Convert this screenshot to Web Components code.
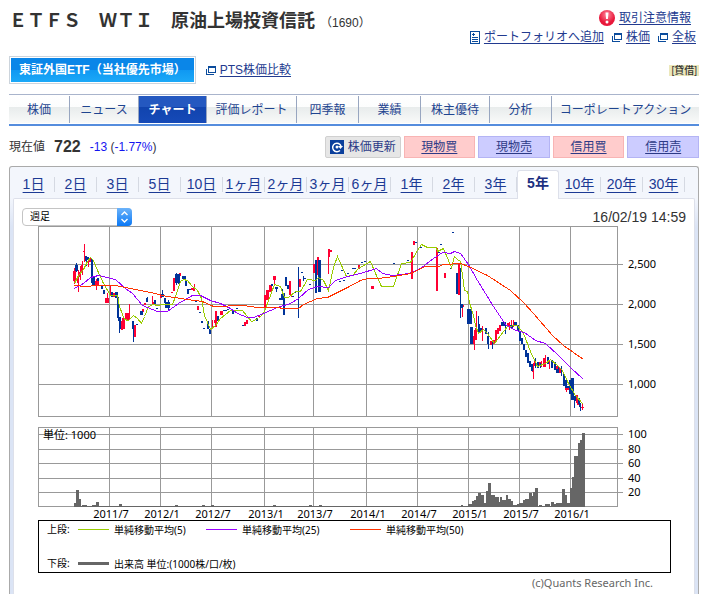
<!DOCTYPE html>
<html lang="ja">
<head>
<meta charset="utf-8">
<meta name="viewport" content="width=device-width, initial-scale=1">
<title>ETFS WTI 原油上場投資信託 (1690)</title>
<style>
  body {
    margin: 0;
    background: #fff;
    color: #333;
    font: 12px/18px "Liberation Sans", "Noto Sans CJK JP", sans-serif;
  }
</style>
</head>
<body>
<quote-page>
  <quote-header code="1690">ＥＴＦＳ　ＷＴＩ　原油上場投資信託</quote-header>
  <market-row></market-row>
  <page-nav></page-nav>
  <price-row price="722" change="-13" percent="-1.77%"></price-row>
  <chart-panel>
    <period-tabs slot="tabs" active="5年"></period-tabs>
    <chart-toolbar time="16/02/19 14:59"></chart-toolbar>
    <price-chart></price-chart>
    <chart-legend></chart-legend>
  </chart-panel>
</quote-page>

<script>
// Base class: every component only has to supply its template()
class BaseElement extends HTMLElement {
  constructor() {
    super();
    this.attachShadow({ mode: 'open' });
  }

  connectedCallback() {
    this.shadowRoot.innerHTML = this.template();
  }
}

class QuotePage extends BaseElement {
  template() {
    return `
      <style>
        :host {
          display: flex;
          flex-direction: column;
          box-sizing: border-box;
          min-height: 100vh;
          padding: 8px 9px 0;
        }
      </style>
      <slot></slot>
    `;
  }
}
customElements.define('quote-page', QuotePage);

class IconLink extends BaseElement {
  template() {
    const icons = {
      window: `<svg width="10" height="9" viewBox="0 0 10 9" fill="none" stroke="#0a4b9c" shape-rendering="crispEdges">
        <path d="M.5 3v5.500H8M2.500 1v5.500h7V1"/><path d="M2 1h8" stroke-width="2"/></svg>`,
      page: `<svg width="10" height="13" viewBox="0 0 10 13" fill="none" stroke="#0a4b9c" shape-rendering="crispEdges">
        <path d="M.5.5h9v12h-9zM2 3.500h3M3.500 2v3M2 6.500h6M2 8.500h6M2 10.500h6"/></svg>`,
      alert: `<svg width="16" height="16" viewBox="0 0 16 16">
        <defs><radialGradient id="g" cy=".3"><stop offset="0" stop-color="#ff8a9c"/><stop offset="1" stop-color="#e8173a"/></radialGradient></defs>
        <circle cx="8" cy="8" r="8" fill="url(#g)"/><path d="M6.500 2.500h3l-.6 6.500H7.100z" fill="#fff"/><circle cx="8" cy="12" r="1.500" fill="#fff"/></svg>`
    };
    return `
      <style>
        :host { display: inline-flex; align-items: center; gap: 4px; }
        svg { flex: none; }
        a {
          color: #223a8f;
          text-decoration: underline;
          text-underline-offset: 2px;
          white-space: nowrap;
        }
      </style>
      ${icons[this.getAttribute('icon')]}
      <a href="#"><slot></slot></a>
    `;
  }
}
customElements.define('icon-link', IconLink);

class QuoteHeader extends BaseElement {
  template() {
    return `
      <style>
        :host { display: flex; justify-content: space-between; height: 48px; }
        h1 {
          margin: 0;
          font-size: 18px;
          line-height: 26px;
          white-space: nowrap;
        }
        .code { font-size: 12px; font-weight: normal; }
        .links {
          display: flex;
          flex-direction: column;
          align-items: flex-end;
          padding-right: 3px;
        }
        .links > icon-link { padding-right: 5px; height: 20px; }
        .row { display: flex; gap: 8px; }
      </style>
      <h1><slot></slot> <span class="code">（${this.getAttribute('code')}）</span></h1>
      <div class="links">
        <icon-link icon="alert">取引注意情報</icon-link>
        <div class="row">
          <icon-link icon="page">ポートフォリオへ追加</icon-link>
          <icon-link icon="window">株価</icon-link>
          <icon-link icon="window">全板</icon-link>
        </div>
      </div>
    `;
  }
}
customElements.define('quote-header', QuoteHeader);

class MarketRow extends BaseElement {
  template() {
    return `
      <style>
        :host { display: flex; align-items: center; gap: 10px; height: 28px; margin-bottom: 10px; }
        button {
          height: 28px;
          padding: 0 9px;
          border: 1px solid #ccd4dc;
          box-shadow: inset 0 0 0 1px #fff;
          background: linear-gradient(#0a86e8 0, #0a86e8 50%, #0f98f2 50%, #1caaf8);
          color: #fff;
          font: bold 12px/18px "Liberation Sans", "Noto Sans CJK JP", sans-serif;
        }
        .loan {
          margin-left: auto;
          background: #ece8bc;
          font-size: 10px;
          line-height: 11px;
          font-weight: 500;
          padding: 0 2px;
        }
      </style>
      <button type="button">東証外国ETF（当社優先市場）</button>
      <icon-link icon="window">PTS株価比較</icon-link>
      <span class="loan">[貸借]</span>
    `;
  }
}
customElements.define('market-row', MarketRow);

class PageNav extends BaseElement {
  template() {
    const items = ['株価', 'ニュース', 'チャート', '評価レポート', '四季報', '業績', '株主優待', '分析', 'コーポレートアクション'];
    return `
      <style>
        :host { display: block; }
        nav {
          display: grid;
          grid-template-columns: 61fr 69fr 68fr 90fr 62fr 62fr 69fr 62fr 147fr;
          padding: 1px 0;
          border-top: 1px solid #a9b4cc;
          border-bottom: 2px solid #558ddd;
        }
        a {
          min-width: 0;
          height: 27px;
          line-height: 28px;
          box-sizing: border-box;
          border-right: 1px solid #98a6c0;
          background: linear-gradient(#fff 0, #fcfdfd 42%, #e8ecec 42%, #f9faf9 100%);
          color: #1f4590;
          text-align: center;
          text-decoration: none;
          white-space: nowrap;
        }
        a:last-child { border-right: 0; }
        a.active {
          background: linear-gradient(#2458c0 0, #2458c0 42%, #1144ae 42%, #164ab8);
          color: #fff;
          font-weight: bold;
        }
      </style>
      <nav>
        ${items.map(t => `<a href="#"${t === 'チャート' ? ' class="active"' : ''}>${t}</a>`).join('')}
      </nav>
    `;
  }
}
customElements.define('page-nav', PageNav);

class PriceRow extends BaseElement {
  template() {
    const trades = [['現物買', 'buy'], ['現物売', 'sell'], ['信用買', 'buy'], ['信用売', 'sell']];
    return `
      <style>
        :host { display: flex; align-items: center; margin: 10px 0 8px; gap: 9px; height: 22px; }
        strong { font-size: 16px; }
        .change { color: #1414f0; margin-right: auto; }
        .change i { font-style: normal; color: #334; }
        .actions { display: grid; grid-template-columns: 76fr 72fr 72fr 72fr 72fr; gap: 3px; width: 374px; }
        button, a {
          box-sizing: border-box;
          min-width: 0;
          height: 22px;
          font: 12px/20px "Liberation Sans", "Noto Sans CJK JP", sans-serif;
          text-align: center;
          white-space: nowrap;
          color: #2c3a86;
          text-underline-offset: 2px;
        }
        button {
          display: flex;
          align-items: center;
          justify-content: center;
          gap: 4px;
          padding: 0;
          border: 1px solid #d0d0d0;
          border-radius: 2px;
          background: #e6e6e6;
        }
        .buy { background: #fcc; border: 1px solid #f8b4b4; }
        .sell { background: #ccf; border: 1px solid #b4b4f4; }
      </style>
      <span>現在値</span>
      <strong>${this.getAttribute('price')}</strong>
      <span class="change">${this.getAttribute('change')} <i>(</i>${this.getAttribute('percent')}<i>)</i></span>
      <div class="actions">
        <button type="button">
          <svg width="14" height="14" viewBox="0 0 14 14">
            <rect width="14" height="14" fill="#0b3f9c"/>
            <path d="M10 10.500A4.300 4.300 0 1 1 11 6" fill="none" stroke="#fff" stroke-width="1.500"/>
            <path d="M13 6H8l2.500 3z" fill="#fff"/><circle cx="7" cy="7" r="1.500" fill="#fff"/>
          </svg>
          株価更新
        </button>
        ${trades.map(([t, c]) => `<a href="#" class="${c}">${t}</a>`).join('')}
      </div>
    `;
  }
}
customElements.define('price-row', PriceRow);

class ChartPanel extends BaseElement {
  template() {
    return `
      <style>
        :host {
          display: flex;
          flex-direction: column;
          flex: 1;
          padding: 0 3px;
          border: 1px solid #aaa;
          border-bottom: 0;
          border-radius: 3px 3px 0 0;
          background: linear-gradient(#f3f6fc 0, #f3f6fc 31px, #dbe4f5 60px);
        }
        .body {
          flex: 1;
          border: 1px solid #dde0ea;
          border-bottom: 0;
          border-radius: 2px 2px 0 0;
          background: #fff;
        }
      </style>
      <slot name="tabs"></slot>
      <div class="body"><slot></slot></div>
    `;
  }
}
customElements.define('chart-panel', ChartPanel);

class PeriodTabs extends BaseElement {
  template() {
    const periods = ['1日', '2日', '3日', '5日', '10日', '1ヶ月', '2ヶ月', '3ヶ月', '6ヶ月',
      '1年', '2年', '3年', '5年', '10年', '20年', '30年'];
    const active = this.getAttribute('active');
    return `
      <style>
        :host { display: block; position: relative; padding: 3px 10px 0 0; margin-bottom: -1px; }
        nav { display: grid; grid-template-columns: repeat(16, 1fr); align-items: center; height: 29px; }
        a {
          border-right: 1px solid #d5d9e2;
          font-size: 14px;
          line-height: 15px;
          color: #1c3a94;
          text-align: center;
          text-underline-offset: 3px;
          white-space: nowrap;
        }
        a.active {
          align-self: stretch;
          border: 1px solid #dde0ea;
          border-bottom: 0;
          border-radius: 3px 3px 0 0;
          background: #fff;
          line-height: 25px;
          font-weight: bold;
          text-decoration: none;
          color: #1c2f80;
        }
      </style>
      <nav>
        ${periods.map(p => `<a href="#"${p === active ? ' class="active"' : ''}>${p}</a>`).join('')}
      </nav>
    `;
  }
}
customElements.define('period-tabs', PeriodTabs);

class ChartToolbar extends BaseElement {
  template() {
    return `
      <style>
        :host {
          display: flex;
          justify-content: space-between;
          align-items: center;
          padding: 9px 8px 0 8px;
        }
        label { display: grid; align-items: center; width: 110px; }
        select, svg { grid-area: 1 / 1; }
        select {
          appearance: none;
          height: 18px;
          padding: 0 7px;
          border: 1px solid #c4c4c4;
          border-radius: 4px;
          background: #fff;
          color: #000;
          font: 10px/16px "Liberation Sans", "Noto Sans CJK JP", sans-serif;
        }
        svg { justify-self: end; pointer-events: none; }
        time { font-size: 14px; line-height: 18px; }
      </style>
      <label>
        <select aria-label="足種">
          <option>週足</option>
          <option>日足</option>
          <option>月足</option>
        </select>
        <svg width="15" height="18" viewBox="0 0 15 18">
          <defs><linearGradient id="b" x2="0" y2="1"><stop stop-color="#6cb3fa"/><stop offset="1" stop-color="#0a78f5"/></linearGradient></defs>
          <path d="M0 0h11a4 4 0 0 1 4 4v10a4 4 0 0 1-4 4H0z" fill="url(#b)"/>
          <path d="M4.500 7l3-3 3 3M4.500 11l3 3 3-3" fill="none" stroke="#fff" stroke-width="1.400"/>
        </svg>
      </label>
      <time>${this.getAttribute('time')}</time>
    `;
  }
}
customElements.define('chart-toolbar', ChartToolbar);

// Candle parts as [x, y, width, height]
const UP = [
  [73,271,3,10],[74,268,1,16],[78,270,1,22],[77,276,2,7],[80,266,1,14],[79,272,2,5],[82,261,1,14],[81,265,2,6],[84,244,1,18],[83,251,2,1],[88,258,1,9],[89,258,2,4],
  [95,281,4,4],[96,279,1,11],[105,298,4,5],[107,293,1,6],[110,286,1,9],[113,293,2,4],[122,318,3,11],[121,321,2,9],[125,313,5,7],[129,304,1,11],
  [134,325,2,12],[142,309,2,3],[144,303,2,2],[152,296,1,9],[153,302,2,3],[160,295,2,3],[171,292,2,1],[173,278,2,13],[179,273,2,3],[191,288,2,2],
  [193,287,2,4],[194,284,1,7],[197,306,2,4],[212,320,1,8],[214,320,2,3],[215,311,2,16],[220,311,3,4],[244,322,2,4],[246,320,2,4],[258,315,2,2],
  [264,295,2,12],[266,290,3,10],[269,285,3,7],[273,276,3,4],[274,276,1,9],[289,281,2,14],[291,296,2,1],[299,279,2,8],[313,264,2,9],[317,257,2,18],
  [328,249,2,8],[328,249,1,25],[330,250,2,2],[358,265,2,4],[371,286,3,3],[411,252,2,27],[413,241,2,4],[436,248,2,43],[444,273,2,5],[458,264,2,31],
  [462,305,2,2],[462,306,1,11],[472,336,2,8],[474,330,1,20],[475,328,2,12],[476,311,1,22],[482,326,1,15],[490,341,2,4],[493,340,2,4],[495,330,2,12],
  [497,328,2,6],[499,325,2,6],[507,323,2,3],[509,322,1,8],[511,320,1,8],[513,320,1,7],[533,363,1,16],[532,366,2,6],[534,361,2,5],[539,362,2,3],
  [541,361,1,6],[543,358,3,9],[545,355,1,8],[549,361,1,8],[556,366,2,3],[559,368,2,5],[565,388,4,2],[566,386,1,6],[576,395,2,8],[577,400,2,5],[582,404,1,6],[581,407,3,1]
];

const DOWN = [
  [75,265,3,6],[76,263,1,9],[85,256,2,5],[86,256,1,10],[87,257,2,3],[91,259,2,24],[92,262,1,23],[93,277,2,9],[97,278,2,3],[101,286,2,3],[103,290,2,4],
  [111,292,2,5],[115,292,3,6],[117,297,2,21],[118,298,1,23],[119,317,2,12],[119,317,1,16],[132,321,2,8],[133,321,1,21],[136,324,2,1],[138,320,2,1],
  [140,311,3,4],[146,298,2,4],[147,297,1,4],[154,300,2,4],[156,308,2,1],[161,294,3,3],[162,290,1,6],[164,298,2,5],[165,302,5,6],[168,300,1,10],[175,274,5,9],
  [176,273,1,12],[178,276,2,8],[182,276,4,3],[185,281,2,5],[187,289,2,5],[189,289,2,1],[195,301,2,1],[199,312,2,1],[201,321,2,2],[203,328,2,1],[207,321,2,8],
  [209,329,2,5],[217,316,2,5],[223,310,4,1],[227,309,2,1],[232,310,2,4],[236,308,2,1],[242,325,2,1],[256,318,2,3],[271,284,2,2],[275,287,3,2],[276,287,1,5],
  [279,298,4,2],[281,294,2,5],[282,289,1,8],[283,293,2,22],[285,277,2,9],[287,285,2,4],[292,296,2,1],[294,292,2,1],[298,267,1,51],[301,272,2,1],
  [303,276,1,5],[304,278,2,1],[309,284,2,1],[315,260,2,33],[318,260,3,32],[339,281,2,1],[341,270,2,1],[343,280,2,1],[347,273,2,1],[352,268,4,1],
  [361,262,2,1],[364,261,2,1],[393,263,2,1],[407,260,2,1],[415,242,2,1],[420,247,2,1],[438,252,2,1],[440,244,2,1],[450,268,2,1],[452,232,2,1],
  [456,273,2,21],[460,268,1,50],[461,304,2,4],[467,309,5,15],[470,327,3,17],[478,324,2,8],[478,316,1,12],[480,328,2,4],[485,328,2,6],[487,336,2,8],
  [488,332,1,17],[492,341,1,8],[501,322,3,4],[504,322,2,4],[505,325,1,9],[510,325,3,3],[514,322,3,4],[517,325,2,6],[519,331,2,10],[521,338,2,6],
  [523,344,2,6],[525,350,2,7],[527,353,2,10],[529,361,2,6],[531,364,2,7],[535,358,1,10],[537,362,2,6],[540,363,1,5],[547,357,2,7],[551,360,2,8],[554,362,2,8],
  [556,369,2,4],[558,367,1,6],[561,366,1,10],[563,374,2,12],[565,380,2,8],[567,386,2,2],[569,380,2,14],[571,378,3,22],[574,396,2,5],[574,399,1,9],[578,398,2,6],[579,400,1,7],[580,403,1,8]
];

const MA5 = '74,283 78,275 83,269 87,261 90,257 93,260 97,270 103,283 110,295 117,295 119,306 124,319 128,320 133,315 137,318 141,323 144,316 148,306 153,304 157,305 162,304 172,304 175,296 180,281 183,279 187,280 191,285 197,290 201,298 204,315 210,329 215,325 220,318 230,310 242,310 251,321 258,318 263,313 270,295 274,284 280,286 284,297 288,297 295,291 300,291 307,279 315,280 318,277 323,280 328,290 333,267 337,256 342,267 346,276 352,275 358,268 370,261 375,273 381,286 393,286 401,263 410,262 417,250 421,244 427,247 436,247 437,251 443,248 451,267 454,256 457,259 460,261 462,275 464,290 467,291 469,302 473,315 475,325 478,333 483,329 487,333 494,343 500,335 507,326 517,325 523,333 530,351 537,366 545,363 550,359 557,365 562,370 568,383 575,395 583,404';
const MA25 = '74,288 83,283 90,277 98,275 115,279 125,288 132,293 142,305 157,311 167,311 178,303 192,295 200,295 210,300 220,303 230,308 237,313 247,317 253,317 263,313 277,307 290,303 298,298 308,289 317,286 328,287 335,280 347,276 360,273 376,268 382,273 392,275 409,273 420,268 433,258 442,252 450,253 454,251 460,253 468,264 477,280 485,293 493,306 505,324 515,330 524,332 535,340 545,343 558,355 570,367 583,379';
const MA50 = '74,285 84,286 98,285 115,285 130,288 150,292 167,296 187,299 202,301 213,306 225,306 230,305 243,305 257,307 277,307 283,308 298,308 303,304 317,298 327,297 347,287 360,280 367,278 378,278 393,276 410,273 425,266 438,266 443,264 460,263 468,266 487,275 510,290 523,302 533,313 552,335 563,345 583,359';

// Volume bars as [x, width, height], standing on the base line
const VOLUME = [
  [74,2,4],[76,3,17],[79,2,8],[82,5,2],[92,4,2],[96,3,5],[119,3,3],[175,3,2],[202,3,2],[211,3,2],[273,3,2],[309,3,2],[319,3,2],[461,2,2],
  [468,4,3],[472,2,6],[474,2,7],[476,2,11],[478,3,14],[481,3,12],[484,2,4],[486,2,16],[488,3,24],[491,4,12],[495,4,10],[499,1,5],[500,2,10],[502,4,7],
  [506,2,12],[508,3,8],[511,2,6],[513,4,2],[517,2,3],[519,4,4],[523,2,7],[525,4,8],[529,3,14],[532,2,11],[533,2,15],[535,3,19],[539,3,2],[545,5,3],
  [551,3,5],[554,2,3],[556,6,4],[562,3,18],[565,2,12],[567,3,4],[570,2,19],[572,2,30],[574,4,51],[576,2,50],[578,2,64],[580,2,67],[582,3,74]
];

class PriceChart extends BaseElement {
  template() {
    const dates = [[109, '2011/7'], [160, '2012/1'], [211, '2012/7'], [264, '2013/1'], [313, '2013/7'],
      [366, '2014/1'], [417, '2014/7'], [468, '2015/1'], [519, '2015/7'], [570, '2016/1']];
    const prices = [[264, '2,500'], [304, '2,000'], [344, '1,500'], [384, '1,000']];
    const volumes = [[434, 100], [449, 80], [463, 60], [478, 40], [492, 20]];
    const ticks = [...prices, ...volumes];
    const rects = list => list.map(([x, y, w, h]) => `M${x} ${y}h${w}v${h}h-${w}z`).join('');
    const bars = VOLUME.map(([x, w, h]) => [x, 507 - h, w, h]);

    return `
      <style>
        :host { display: block; }
        svg { display: block; width: 100%; height: auto; }
        text { font: 11px "Noto Sans", "Noto Sans CJK JP", sans-serif; fill: #000; }
        .grid { fill: none; stroke: #999; }
        .line { fill: none; }
      </style>
      <svg viewBox="14 226 680 294" role="img" aria-label="株価チャート" shape-rendering="crispEdges">
        <g class="grid" transform="translate(.5 .5)">
          <path d="M38 226h579v190H38zM38 427h579v79H38z"/>
          <path d="${dates.map(([x]) => `M${x} 226v190M${x} 427v79`).join('')}"/>
          <path d="${ticks.map(([y]) => `M38 ${y}h584`).join('')}"/>
        </g>
        <path d="${rects(UP)}" fill="#ff0033"/>
        <path d="${rects(DOWN)}" fill="#003399"/>
        <g class="line" transform="translate(.5 .5)">
          <polyline points="${MA5}" stroke="#99cc00"/>
          <polyline points="${MA25}" stroke="#9900ff"/>
          <polyline points="${MA50}" stroke="#ff3300"/>
        </g>
        <path d="${rects(bars)}M74 506h510v1H74z" fill="#666"/>
        ${ticks.map(([y, t]) => `<text x="628" y="${y + 4}">${t}</text>`).join('')}
        ${dates.map(([x, t]) => `<text x="${x + 2}" y="518" text-anchor="middle">${t}</text>`).join('')}
        <text x="43" y="439">単位: 1000</text>
      </svg>
    `;
  }
}
customElements.define('price-chart', PriceChart);

class ChartLegend extends BaseElement {
  template() {
    return `
      <style>
        :host {
          display: block;
          margin: 0 23px 0 24px;
          font: 10px/16px "Noto Sans", "Noto Sans CJK JP", sans-serif;
          color: #000;
        }
        .box {
          display: grid;
          grid-template-columns: 31px 128px 144px 1fr;
          row-gap: 17px;
          height: 53px;
          box-sizing: border-box;
          padding-left: 8px;
          border: 1px solid #000;
          white-space: nowrap;
        }
        .item { display: flex; align-items: center; gap: 5px; }
        .item::before { content: ""; flex: none; width: 31px; height: 1px; background: var(--line); }
        .volume { grid-column: 2 / -1; }
        .volume::before { height: 3px; }
        small {
          display: block;
          padding: 2px 18px 0 0;
          font-size: 11px;
          line-height: 16px;
          color: #666;
          text-align: right;
        }
      </style>
      <div class="box">
        <span>上段:</span>
        <span class="item" style="--line: #99cc00">単純移動平均(5)</span>
        <span class="item" style="--line: #9900ff">単純移動平均(25)</span>
        <span class="item" style="--line: #ff3300">単純移動平均(50)</span>
        <span>下段:</span>
        <span class="item volume" style="--line: #666">出来高 単位:(1000株/口/枚)</span>
      </div>
      <small>(c)Quants Research Inc.</small>
    `;
  }
}
customElements.define('chart-legend', ChartLegend);
</script>
</body>
</html>
